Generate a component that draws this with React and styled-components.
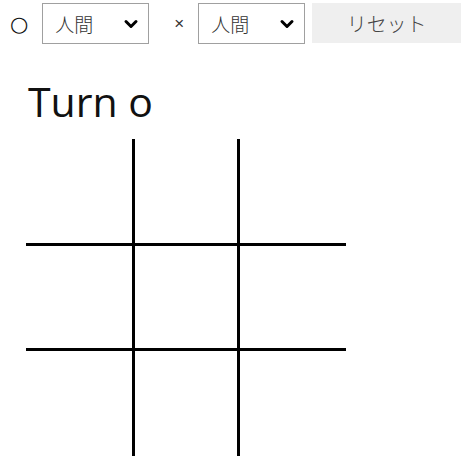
import { useState } from "react";
import styled, { createGlobalStyle } from "styled-components";
import { ChevronDown } from "lucide-react";

const GlobalStyle = createGlobalStyle`
  body {
    margin: 0;
    background: #fff;
    font-family: "Open Sans", "Noto Sans CJK JP", sans-serif;
    color: #111;
  }
`;

const PLAYERS = ["人間", "CPU"];

export default function App() {
  const [board, setBoard] = useState(Array(9).fill(""));
  const [turn, setTurn] = useState("o");

  const play = (i) => {
    if (board[i]) return;
    const next = board.slice();
    next[i] = turn;
    setBoard(next);
    setTurn(turn === "o" ? "x" : "o");
  };

  const reset = () => {
    setBoard(Array(9).fill(""));
    setTurn("o");
  };

  return (
    <>
      <GlobalStyle />
      <Toolbar>
        <Mark>○</Mark>
        <PlayerSelect />
        <Cross>×</Cross>
        <PlayerSelect />
        <ResetButton onClick={reset}>リセット</ResetButton>
      </Toolbar>
      <Title>Turn {turn}</Title>
      <Board>
        {board.map((v, i) => (
          <Cell key={i} onClick={() => play(i)}>
            {v}
          </Cell>
        ))}
      </Board>
    </>
  );
}

function PlayerSelect() {
  return (
    <SelectWrap>
      <Select defaultValue={PLAYERS[0]}>
        {PLAYERS.map((p) => (
          <option key={p}>{p}</option>
        ))}
      </Select>
      <Arrow>
        <ChevronDown size={20} strokeWidth={3.6} />
      </Arrow>
    </SelectWrap>
  );
}

const Toolbar = styled.div`
  display: flex;
  align-items: center;
  padding: 3px 0 0 10px;
  height: 41px;
`;

const Mark = styled.span`
  font-family: "DejaVu Sans", sans-serif;
  font-size: 21px;
  color: #111;
  margin-right: 14px;
`;

const Cross = styled.span`
  font-family: "Liberation Sans", sans-serif;
  font-size: 17px;
  color: #333;
  margin: 0 14px 0 25px;
`;

const SelectWrap = styled.div`
  position: relative;
  width: 108px;
  height: 41px;
`;

const Select = styled.select`
  appearance: none;
  box-sizing: border-box;
  width: 100%;
  height: 100%;
  border: 1px solid #a0a0a0;
  border-radius: 0;
  background: #fff;
  padding: 0 0 0 12px;
  font-family: "Noto Sans CJK JP", sans-serif;
  font-size: 19px;
  font-weight: 300;
  color: #333;
  outline: none;
`;

const Arrow = styled.span`
  position: absolute;
  right: 8px;
  top: 11px;
  display: flex;
  color: #000;
  pointer-events: none;
`;

const ResetButton = styled.button`
  margin-left: 7px;
  width: 150px;
  height: 40px;
  border: none;
  background: #efefef;
  color: #444;
  font-family: "Noto Sans CJK JP", sans-serif;
  font-size: 20px;
  font-weight: 300;
  align-self: flex-start;
`;

const Title = styled.h1`
  margin: 37px 0 0 28px;
  font-size: 41px;
  line-height: 1;
  font-weight: 400;
  font-family: "Open Sans", sans-serif;
`;

const Board = styled.div`
  display: grid;
  grid-template-columns: 106px 102px 106px;
  grid-template-rows: 104px 102px 105px;
  gap: 3px;
  background: #000;
  width: 320px;
  margin: 17px 0 0 26px;
`;

const Cell = styled.div`
  background: #fff;
  display: flex;
  align-items: center;
  justify-content: center;
  font-size: 60px;
`;
